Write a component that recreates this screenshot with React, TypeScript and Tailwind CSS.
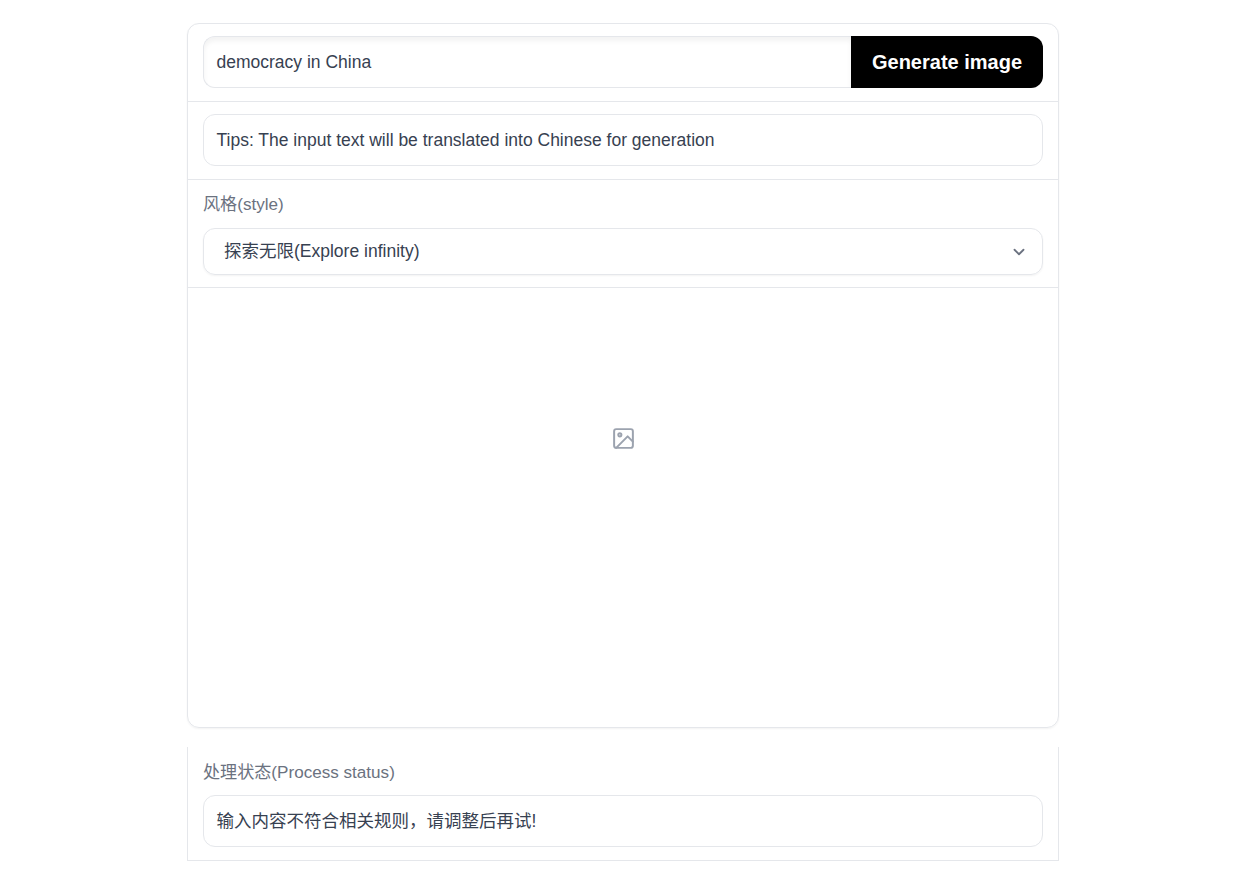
const font = '[font-family:"Liberation_Sans","Noto_Sans_CJK_SC",sans-serif]';

function ChevronIcon() {
  return (
    <svg viewBox="0 0 24 24" fill="none" stroke="currentColor" strokeWidth={2.4} strokeLinecap="round" strokeLinejoin="round" className="h-[18px] w-[18px] text-[#6b7280]">
      <path d="m6 9 6 6 6-6" />
    </svg>
  );
}

function PictureIcon() {
  return (
    <svg viewBox="0 0 24 24" fill="none" stroke="currentColor" strokeWidth={1.9} strokeLinecap="round" strokeLinejoin="round" className="h-[25px] w-[25px] text-[#9ca3af]">
      <rect x="3" y="3" width="18" height="18" rx="2" ry="2" />
      <circle cx="8.5" cy="8.5" r="1.5" />
      <polyline points="21 15 16 10 5 21" />
    </svg>
  );
}

export default function App() {
  return (
    <div className={`min-h-screen bg-white pt-[23px] pr-px text-[17.5px] ${font}`}>
      <div className="mx-auto w-[872px]">
        {/* Main card */}
        <div className="overflow-hidden rounded-[12px] border border-[#e5e7eb] shadow-[0_1px_2px_rgba(0,0,0,0.05)]">
          <div className="border-b border-[#e5e7eb] px-[15px] pt-3 pb-[13px]">
            <div className="flex h-[52px]">
              <div className="flex flex-1 items-center rounded-l-[12px] border border-r-0 border-[#e5e7eb] pr-3 pl-[12.5px] text-[#374151] shadow-[inset_0_4px_5px_rgba(0,0,0,0.05)]">
                democracy in China
              </div>
              <button className="w-[192px] rounded-r-[12px] bg-black text-[20px] font-bold text-white">
                Generate image
              </button>
            </div>
          </div>

          <div className="border-b border-[#e5e7eb] px-[15px] pt-3 pb-[13px]">
            <div className="flex h-[52px] items-center rounded-[12px] border border-[#e5e7eb] pr-3 pl-[12.5px] text-[#374151]">
              Tips: The input text will be translated into Chinese for generation
            </div>
          </div>

          <div className="border-b border-[#e5e7eb] px-[15px] pt-3 pb-3">
            <div className="mb-[11px] h-[25px] text-[17.1px] leading-[25px] text-[#6b7280]">风格(style)</div>
            <div className="flex h-[47px] items-center justify-between rounded-[12px] border border-[#e5e7eb] pr-[14px] pl-5 text-[#374151] shadow-[0_1px_2px_rgba(0,0,0,0.05)]">
              <span>探索无限(Explore infinity)</span>
              <ChevronIcon />
            </div>
          </div>

          <div className="flex h-[439px] items-start justify-center pt-[138px]">
            <PictureIcon />
          </div>
        </div>

        {/* Status */}
        <div className="mt-[19px] border-x border-b border-[#e5e7eb] px-[15px] pt-[13px] pb-[13px]">
          <div className="mb-[10px] h-[25px] text-[17.1px] leading-[25px] text-[#6b7280]">处理状态(Process status)</div>
          <div className="flex h-[52px] items-center rounded-[12px] border border-[#e5e7eb] pr-3 pl-[12.5px] text-[#374151]">
            输入内容不符合相关规则，请调整后再试!
          </div>
        </div>
      </div>
    </div>
  );
}
